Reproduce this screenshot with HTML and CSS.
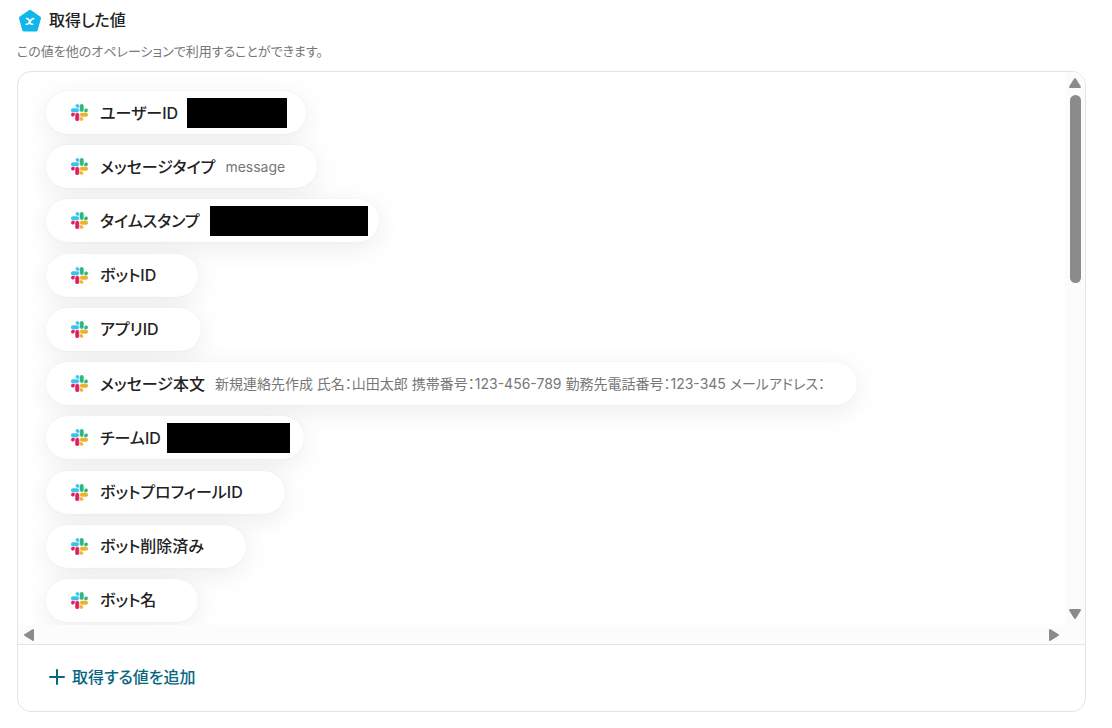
FILE: index.html
```
<!DOCTYPE html>
<html lang="ja">
<head>
<meta charset="utf-8">
<title>取得した値</title>
<link rel="stylesheet" href="styles.css">
</head>
<body>
<svg class="defs" aria-hidden="true">
  <symbol id="slack" viewBox="0 0 54 54">
    <g stroke-width="1.6">
    <path fill="#36c5f0" stroke="#36c5f0" d="M19.7 1a5 5 0 0 0 0 9.9h5.4V5.5A5.4 5.4 0 0 0 19.7 1m0 13.5H5.4a5.4 5.4 0 0 0 0 10.8h14.3a5.4 5.4 0 0 0 0-10.8"/>
    <path fill="#2eb67d" stroke="#2eb67d" d="M53.2 19.9a5.1 5.1 0 0 0-10.2 0v5.4h5.4a5.4 5.4 0 0 0 4.8-5.4m-13.8 0V5.5a5.4 5.4 0 0 0-10.7 0v14.4a5.4 5.4 0 0 0 10.7 0"/>
    <path fill="#ecb22e" stroke="#ecb22e" d="M34.1 53a5 5 0 0 0 0-9.8h-5.4v5.4a5.4 5.4 0 0 0 5.4 4.4m0-13.4h14.3a5.4 5.4 0 0 0 0-10.8H34.1a5.4 5.4 0 0 0 0 10.8"/>
    <path fill="#e01e5a" stroke="#e01e5a" d="M.8 34.2a5 5 0 0 0 10 0v-5.4H5.4a5.4 5.4 0 0 0-4.6 5.4m13.5 0v14.4a5.4 5.4 0 0 0 10.8 0V34.2a5.4 5.4 0 0 0-10.8 0"/>
    </g>
  </symbol>
</svg>
<main class="page">
  <header class="heading">
    <svg class="badge" viewBox="0 0 24 24" aria-hidden="true">
      <path d="M12 3.8 21 10.2 17.8 21.6H6.2L3 10.2Z" fill="#12b7ea" stroke="#12b7ea" stroke-width="4" stroke-linejoin="round"/>
      <path d="M8.6 10.6h.6c.9 0 1.3.4 1.6 1.1l1.5 3.4c.3.7.7 1.1 1.5 1.1h1M15.8 10.6h-.5c-.7 0-1.2.3-1.8 1l-2.7 3.6c-.5.7-1 1-1.7 1h-.9" fill="none" stroke="#fff" stroke-width="1.6" stroke-linecap="round"/>
    </svg>
    <h1 class="title">取得した値</h1>
  </header>
  <p class="description">この値を他のオペレーションで利用することができます。</p>
  <section class="panel">
    <div class="viewport">
      <ul class="values">
        <li class="chip"><svg class="logo"><use href="#slack"/></svg><span class="label">ユーザーID</span><span class="mask mask-user"></span></li>
        <li class="chip"><svg class="logo"><use href="#slack"/></svg><span class="label">メッセージタイプ</span><span class="value">message</span></li>
        <li class="chip"><svg class="logo"><use href="#slack"/></svg><span class="label">タイムスタンプ</span><span class="mask mask-time"></span></li>
        <li class="chip"><svg class="logo"><use href="#slack"/></svg><span class="label">ボットID</span><span class="value"></span></li>
        <li class="chip"><svg class="logo"><use href="#slack"/></svg><span class="label">アプリID</span><span class="value"></span></li>
        <li class="chip"><svg class="logo"><use href="#slack"/></svg><span class="label">メッセージ本文</span><span class="value">新規連絡先作成 氏名：山田太郎 携帯番号：123-456-789 勤務先電話番号：123-345 メールアドレス：</span></li>
        <li class="chip"><svg class="logo"><use href="#slack"/></svg><span class="label">チームID</span><span class="mask mask-team"></span></li>
        <li class="chip"><svg class="logo"><use href="#slack"/></svg><span class="label">ボットプロフィールID</span><span class="value"></span></li>
        <li class="chip"><svg class="logo"><use href="#slack"/></svg><span class="label">ボット削除済み</span><span class="value"></span></li>
        <li class="chip"><svg class="logo"><use href="#slack"/></svg><span class="label">ボット名</span><span class="value"></span></li>
      </ul>
      <div class="track track-y">
        <svg class="arrow" viewBox="0 0 14 14"><path d="M7 3 12 11H2Z"/></svg>
        <div class="thumb"></div>
        <svg class="arrow arrow-end" viewBox="0 0 14 14"><path d="M7 11 2 3h10Z"/></svg>
      </div>
      <div class="track track-x">
        <svg class="arrow" viewBox="0 0 14 14"><path d="M3 7 11 2v10Z"/></svg>
        <svg class="arrow arrow-end" viewBox="0 0 14 14"><path d="M11 7 3 2v10Z"/></svg>
      </div>
      <div class="track"></div>
    </div>
    <footer class="actions">
      <button class="add" type="button">
        <svg class="plus" viewBox="0 0 16 16" aria-hidden="true"><path d="M8 1v14M1 8h14" fill="none" stroke="currentColor" stroke-width="2" stroke-linecap="round"/></svg>
        取得する値を追加
      </button>
    </footer>
  </section>
</main>
</body>
</html>
```
FILE: styles.css
```
* { box-sizing: border-box; }
body {
  margin: 0;
  background: #fff;
  color: #222;
  font-family: Inter, "Noto Sans CJK JP", sans-serif;
  font-feature-settings: "palt";
}
.defs { display: none; }
.page { padding: 8px 26px 16px 17px; }
.heading { display: flex; align-items: center; gap: 6px; height: 24px; }
.badge { width: 26px; height: 24px; }
.title { margin: 0; font-size: 16px; line-height: 24px; font-weight: 500; }
.description { margin: 9px 0 10px; font-size: 13px; line-height: 20px; color: #777; }
.panel { border: 1px solid #e4e4e4; border-radius: 14px; overflow: hidden; }
.viewport { display: grid; grid-template-columns: 1fr 20px; grid-template-rows: 553px 19px; }
.values {
  display: flex;
  flex-direction: column;
  align-items: flex-start;
  justify-content: space-between;
  margin: 0;
  padding: 19px 28px 3px;
  list-style: none;
  overflow: hidden;
}
.chip {
  display: flex;
  align-items: center;
  height: 43px;
  padding: 0 32px 0 25px;
  border-radius: 22px;
  background: #fff;
  box-shadow: 0 6px 28px rgba(0, 0, 0, 0.08), 0 0 2px rgba(0, 0, 0, 0.05);
  white-space: nowrap;
}
.logo { width: 17px; height: 17px; margin-right: 12px; }
.label { font-size: 16px; line-height: 24px; font-weight: 500; }
.value { margin-left: 10px; font-size: 14px; line-height: 24px; color: #777; }
.mask { height: 30px; background: #000; }
.mask-user { width: 100px; margin: 0 -13px 0 9px; }
.mask-time { width: 158px; margin: 0 -21px 0 10px; }
.mask-team { width: 123px; margin: 0 -18px 0 6px; }
.track { display: flex; align-items: center; background: #fcfcfc; }
.track-y { flex-direction: column; padding: 4px 0; }
.track-x { padding: 0 4px; }
.arrow { width: 14px; height: 14px; fill: #8b8b8b; stroke: #8b8b8b; stroke-width: 2; stroke-linejoin: round; }
.arrow-end { margin-top: auto; }
.track-x .arrow-end { margin: 0 0 0 auto; }
.thumb { width: 11px; height: 188px; margin-top: 5px; border-radius: 6px; background: #8b8b8b; }
.actions { padding: 20px 31px 22px; border-top: 1px solid #e4e4e4; }
.add {
  display: flex;
  align-items: center;
  gap: 7px;
  padding: 0;
  border: 0;
  background: none;
  color: #06677f;
  font: inherit;
  font-feature-settings: inherit;
  font-size: 16px;
  line-height: 24px;
  font-weight: 500;
}
.plus { width: 16px; height: 16px; }
```
